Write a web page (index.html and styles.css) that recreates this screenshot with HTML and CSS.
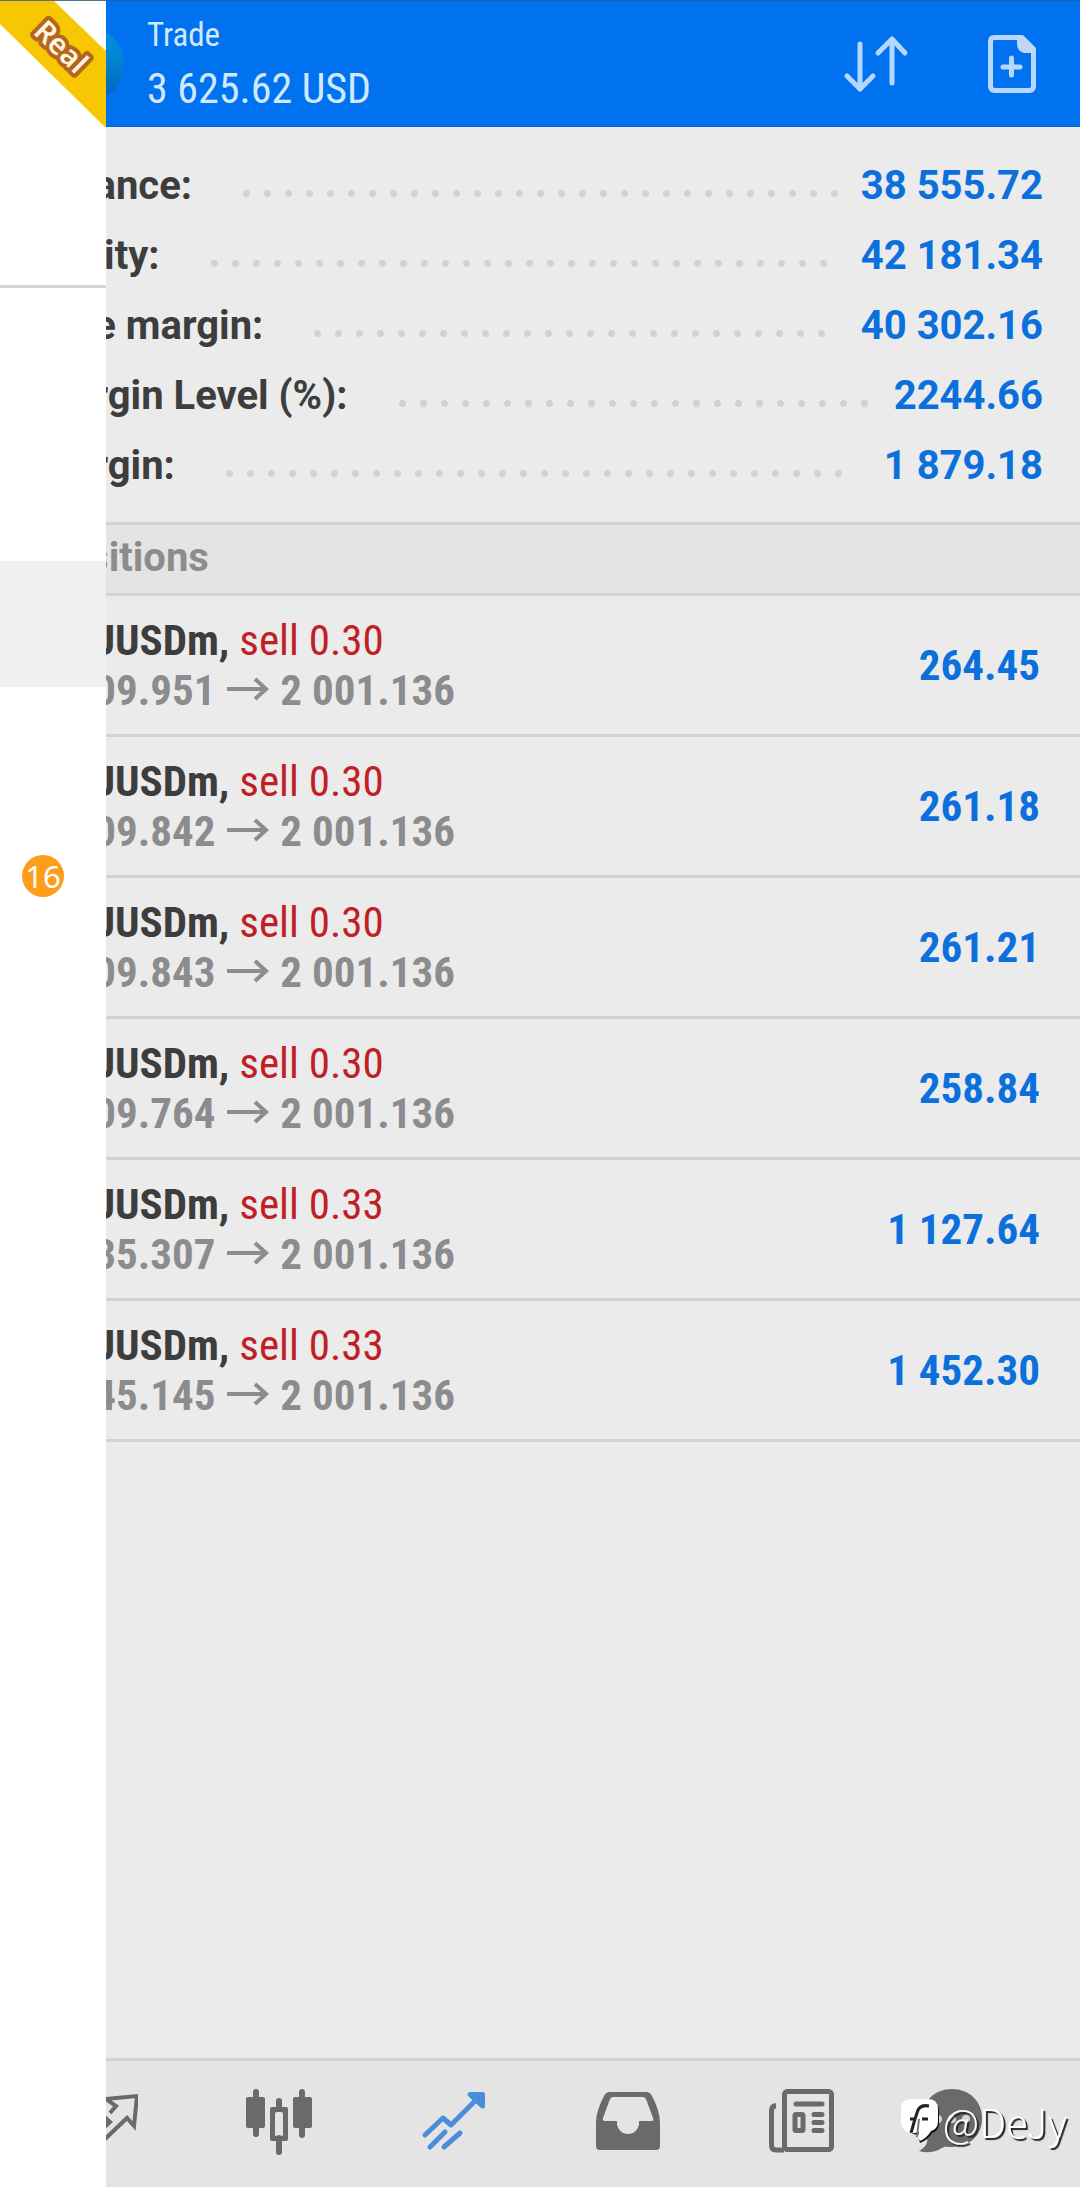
FILE: index.html
```
<!DOCTYPE html>
<html lang="en">
<head>
<meta charset="utf-8">
<meta name="viewport" content="width=device-width">
<title>Trade</title>
<link rel="stylesheet" href="styles.css">
</head>
<body>
<div class="app">
  <header class="topbar">
    <span class="logo"></span>
    <div class="topbar-text">
      <h1 class="title">Trade</h1>
      <p class="profit">3 625.62 USD</p>
    </div>
    <button class="icon-button" type="button" aria-label="Sort">
      <svg width="66" height="58" viewBox="0 0 66 58" fill="none" stroke="#b5d8ff" stroke-width="5" stroke-linecap="round" stroke-linejoin="round"><path d="M17 9V54M4 41L17 54L30 41M49 48V5M35 18L49 4L62 18"/></svg>
    </button>
    <button class="icon-button" type="button" aria-label="New order">
      <svg width="48" height="58" viewBox="0 0 48 58"><path fill="none" stroke="#b5d8ff" stroke-width="5" stroke-linejoin="round" d="M6 2.500H34L45.500 14V51Q45.500 55.500 41 55.500H7Q2.500 55.500 2.500 51V7Q2.500 2.500 6 2.500Z"/><path fill="#c3d7f2" d="M29 3H35L46 14V18H36Q29 16 29 9Z"/><path stroke="#b5d8ff" stroke-width="5" stroke-linecap="round" d="M15 32H32M23.500 23V40"/></svg>
    </button>
  </header>

  <main class="content">
    <dl class="summary">
      <div class="summary-row"><dt>Balance:</dt><dd class="leader"><span class="dots"></span></dd><dd>38 555.72</dd></div>
      <div class="summary-row"><dt>Equity:</dt><dd class="leader"><span class="dots"></span></dd><dd>42 181.34</dd></div>
      <div class="summary-row"><dt>Free margin:</dt><dd class="leader"><span class="dots"></span></dd><dd>40 302.16</dd></div>
      <div class="summary-row"><dt>Margin Level (%):</dt><dd class="leader"><span class="dots"></span></dd><dd>2244.66</dd></div>
      <div class="summary-row"><dt>Margin:</dt><dd class="leader"><span class="dots"></span></dd><dd>1 879.18</dd></div>
    </dl>

    <h2 class="section-title">Positions</h2>
    <ul class="positions">
      <li class="position">
        <div><p class="symbol">XAUUSDm, <span class="sell">sell 0.30</span></p>
        <p class="prices">2 009.951 <svg class="arrow" viewBox="0 0 42 24"><path d="M0 12H39M28 2L39 12L28 22"/></svg> 2 001.136</p></div>
        <p class="value">264.45</p>
      </li>
      <li class="position">
        <div><p class="symbol">XAUUSDm, <span class="sell">sell 0.30</span></p>
        <p class="prices">2 009.842 <svg class="arrow" viewBox="0 0 42 24"><path d="M0 12H39M28 2L39 12L28 22"/></svg> 2 001.136</p></div>
        <p class="value">261.18</p>
      </li>
      <li class="position">
        <div><p class="symbol">XAUUSDm, <span class="sell">sell 0.30</span></p>
        <p class="prices">2 009.843 <svg class="arrow" viewBox="0 0 42 24"><path d="M0 12H39M28 2L39 12L28 22"/></svg> 2 001.136</p></div>
        <p class="value">261.21</p>
      </li>
      <li class="position">
        <div><p class="symbol">XAUUSDm, <span class="sell">sell 0.30</span></p>
        <p class="prices">2 009.764 <svg class="arrow" viewBox="0 0 42 24"><path d="M0 12H39M28 2L39 12L28 22"/></svg> 2 001.136</p></div>
        <p class="value">258.84</p>
      </li>
      <li class="position">
        <div><p class="symbol">XAUUSDm, <span class="sell">sell 0.33</span></p>
        <p class="prices">2 035.307 <svg class="arrow" viewBox="0 0 42 24"><path d="M0 12H39M28 2L39 12L28 22"/></svg> 2 001.136</p></div>
        <p class="value">1 127.64</p>
      </li>
      <li class="position">
        <div><p class="symbol">XAUUSDm, <span class="sell">sell 0.33</span></p>
        <p class="prices">2 045.145 <svg class="arrow" viewBox="0 0 42 24"><path d="M0 12H39M28 2L39 12L28 22"/></svg> 2 001.136</p></div>
        <p class="value">1 452.30</p>
      </li>
    </ul>
  </main>

  <nav class="tabs">
    <a class="tab" href="#quotes" aria-label="Quotes">
      <svg width="66" height="66" viewBox="0 0 66 66" fill="none" stroke="#6a6a6a" stroke-width="4"><path d="M38 24L44 17L34 10L65 7L62 37L55 29L32 51L10 62"/><path fill="#6a6a6a" stroke="none" d="M30 23L41 33L30 43Z"/></svg>
    </a>
    <a class="tab" href="#charts" aria-label="Charts">
      <svg width="66" height="66" viewBox="0 0 66 66" fill="#6a6a6a"><rect y="8" width="19" height="31" rx="2"/><rect x="7" width="6" height="48" rx="3"/><rect x="47" y="8" width="19" height="31" rx="2"/><rect x="53" width="6" height="49" rx="3"/><rect x="30" y="9" width="6" height="13" rx="3"/><rect x="30" y="46" width="6" height="20" rx="3"/><path fill-rule="evenodd" d="M26 18H40Q42 18 42 20V50Q42 52 40 52H26Q24 52 24 50V20Q24 18 26 18ZM29 25V46Q29 47 30 47H36Q37 47 37 46V25Q37 23 35 23H31Q29 23 29 25Z"/></svg>
    </a>
    <a class="tab" href="#trade" aria-label="Trade">
      <svg width="66" height="66" viewBox="0 0 66 66" fill="none" stroke="#4a8edb" stroke-width="5" stroke-linecap="round" stroke-linejoin="round"><path d="M4 46L22 29L30 36L59 7M9 58L24 43M23 58L39 44"/><path fill="#3b86e2" d="M49 5.500H61.500V17Z"/></svg>
    </a>
    <a class="tab" href="#history" aria-label="History">
      <svg width="66" height="66" viewBox="0 0 66 66" fill="#6a6a6a"><path fill-rule="evenodd" d="M15 3H51Q55 3 57 7Q65 22 65 34V57Q65 61 61 61H5Q1 61 1 57V34Q1 22 9 7Q11 3 15 3ZM18 8Q16 8 15 10L8 29Q7 32 10 32H22V34A11 11 0 0 0 44 34V32H57Q59 32 58 29L51 10Q50 8 48 8Z"/></svg>
    </a>
    <a class="tab" href="#news" aria-label="News">
      <svg width="66" height="66" viewBox="0 0 66 66" fill="none" stroke="#6a6a6a" stroke-width="5" stroke-linecap="round"><rect x="15.500" y="2.500" width="47" height="58" rx="3"/><path d="M15 61H7Q2.500 61 2.500 56V22Q2.500 17 7 16.500" stroke-linecap="butt"/><path d="M27 15H53M45 25.500H53M45 33.500H53M45 41.500H53"/><rect x="26" y="25.500" width="8" height="16" rx="1"/></svg>
    </a>
    <a class="tab" href="#messages" aria-label="Messages">
      <svg width="66" height="66" viewBox="0 0 66 66"><path fill="#6a6a6a" d="M33 0C50 0 63 12 63 29C63 46 51 58 33 58C28 58 26 57 23 59C15 64 7 64 0 62C7 58 9 54 8 48C5 42 3 36 3 29C3 12 16 0 33 0Z"/><g fill="#d8d8d8"><circle cx="19" cy="30" r="4"/><circle cx="33" cy="30" r="4"/><circle cx="47" cy="30" r="4"/></g></svg>
    </a>
  </nav>
</div>

<aside class="drawer">
  <div class="account">
    <svg class="ribbon" width="106" height="127" viewBox="0 0 106 127"><path fill="#f8c704" d="M0 0H54L106 50V127L0 23Z"/><text class="ribbon-text" x="54" y="53" text-anchor="middle" transform="rotate(44 54 53)">Real</text></svg>
  </div>
  <ul class="menu">
    <li class="menu-item"></li>
    <li class="menu-item"></li>
    <li class="menu-item menu-item-active"></li>
    <li class="menu-item"></li>
    <li class="menu-item"><span class="badge">16</span></li>
  </ul>
</aside>

<div class="watermark">
  <svg width="38" height="44" viewBox="0 0 38 44"><path fill="#111" d="M12 2H28Q38 2 38 12V24Q38 32 31 34Q27 41 19 44Q17 40 18 36L11 35Z"/><path fill="#fff" d="M10 0H27Q37 0 37 10V22Q37 30 30 32Q26 39 19 42Q16 38 18 33L10 35Q0 32 0 22V10Q0 0 10 0Z"/><path fill="none" stroke="#222" stroke-width="3" d="M28 7Q18 5 16 14L14 20M9 20H15M21 20H27M14 20L10 34"/><path fill="none" stroke="#777" stroke-width="2" d="M18 20L16 38"/></svg>
  <span>@DeJy</span>
</div>
</body>
</html>
```
FILE: styles.css
```
* {
  box-sizing: border-box;
}

body,
h1,
h2,
p,
ul,
dl,
dd {
  margin: 0;
  padding: 0;
}

body {
  background: #ebebeb;
  font-family: Roboto, "Liberation Sans", sans-serif;
}

ul {
  list-style: none;
}

svg {
  display: block;
}

.app {
  display: flex;
  flex-direction: column;
  min-height: 100vh;
}

.topbar {
  display: flex;
  align-items: center;
  height: 127px;
  padding: 0 44px 0 50px;
  background: #0072ef;
  border-top: 1px solid #1d62a8;
  border-bottom: 1px solid #1560b8;
  color: #cfe9ff;
  font-family: "Roboto Condensed", Roboto, sans-serif;
}

.logo {
  width: 74px;
  height: 74px;
  margin-right: 23px;
  border-radius: 50%;
  background: linear-gradient(#0092dc, #0086d4 40%, #0460b4);
}

.topbar-text {
  flex: 1;
}

.title {
  font-size: 33px;
  font-weight: 400;
  line-height: 50px;
}

.profit {
  font-size: 42px;
  line-height: 58px;
}

.icon-button {
  margin-left: 79px;
  padding: 0;
  border: 0;
  background: none;
}

.summary {
  padding: 23px 37px 22px;
  border-bottom: 3px solid #d2d2d2;
}

.summary-row {
  display: flex;
  align-items: center;
  height: 70px;
  color: #0b70dc;
  font-size: 40px;
  font-weight: 700;
}

.summary-row dt {
  color: #3d3d3d;
}

.leader {
  flex: 1;
  margin: 17px 15px 0 44px;
}

.dots {
  display: block;
  width: round(down, 100%, 21px);
  height: 7px;
  background: radial-gradient(circle, #d2d2d2 3px, transparent 4px) 0 0 / 21px 7px;
}

.section-title {
  height: 71px;
  padding: 0 40px;
  border-bottom: 3px solid #d2d2d2;
  background: #e4e4e4;
  color: #8c8c8e;
  font-size: 40px;
  line-height: 65px;
}

.position {
  display: flex;
  align-items: center;
  justify-content: space-between;
  height: 141px;
  padding: 0 40px 0 41px;
  border-bottom: 3px solid #d2d2d2;
  font-family: "Roboto Condensed", Roboto, sans-serif;
  font-size: 43px;
  font-weight: 700;
  line-height: 50px;
}

.symbol {
  color: #3d3d3d;
}

.sell {
  color: #c02025;
  font-weight: 400;
}

.prices {
  color: #8c8c8e;
}

.arrow {
  display: inline-block;
  width: 42px;
  height: 24px;
  margin: 0 1px 0 2px;
  vertical-align: 4px;
  fill: none;
  stroke: #8c8c8e;
  stroke-width: 4;
}

.value {
  color: #0b70dc;
}

.content {
  flex: 1;
}

.tabs {
  display: grid;
  grid-template-columns: 174fr 174fr 174fr 174fr 174fr 126fr;
  height: 129px;
  padding: 0 6% 4px 18px;
  border-top: 3px solid #d2d2d2;
  background: #e4e4e4;
}

.tab {
  display: flex;
  align-items: center;
  justify-content: center;
}

.drawer {
  position: fixed;
  top: 0;
  bottom: 0;
  left: 0;
  width: 106px;
  background: #fff;
  border-top: 1px solid #4f7482;
}

.account {
  height: 287px;
  border-bottom: 3px solid #d4d4d4;
}

.ribbon-text {
  fill: #fff6e0;
  stroke: #b5651d;
  stroke-width: 8px;
  stroke-linejoin: round;
  paint-order: stroke;
  font-family: "Noto Sans", sans-serif;
  font-size: 29px;
  font-weight: 600;
}

.menu {
  padding-top: 21px;
}

.menu-item {
  display: flex;
  align-items: center;
  height: 126px;
  padding-left: 22px;
}

.menu-item-active {
  background: #f0f0f0;
}

.badge {
  width: 42px;
  height: 42px;
  border-radius: 50%;
  background: #fd9d1b;
  color: #fff;
  font-family: "Noto Sans", sans-serif;
  font-size: 31px;
  line-height: 42px;
  text-align: center;
}

.watermark {
  position: fixed;
  right: 13px;
  bottom: 38px;
  display: flex;
  align-items: center;
  gap: 4px;
  color: #fff;
  font-family: "Noto Sans CJK SC", sans-serif;
  font-size: 40px;
  font-weight: 300;
  line-height: 56px;
  text-shadow: 2px 2px 1px #222;
}
```
